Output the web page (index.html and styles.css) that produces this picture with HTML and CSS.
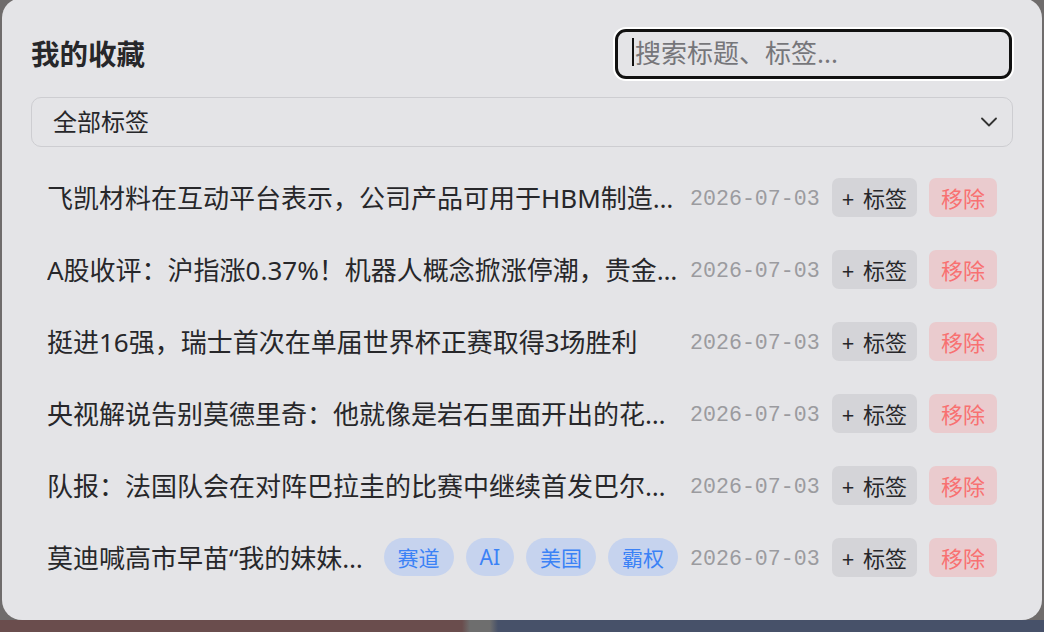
FILE: index.html
```html
<!DOCTYPE html>
<html lang="zh-CN">
<head>
  <meta charset="UTF-8">
  <meta name="viewport" content="width=device-width, initial-scale=1.0">
  <title>我的收藏</title>
  <link rel="stylesheet" href="styles.css">
</head>
<body>

<div class="panel">
  <div class="header">
    <h2>我的收藏</h2>
    <div class="search">
      <input type="text" placeholder="搜索标题、标签...">
      <span class="caret"></span>
    </div>
  </div>

  <div class="select">
    <span>全部标签</span>
    <svg width="16" height="10" viewBox="0 0 16 10"><path d="M1 1.5l7 7 7-7" fill="none" stroke="#333" stroke-width="1.8" stroke-linecap="round" stroke-linejoin="round"/></svg>
  </div>

  <ul class="list">
    <li class="row">
      <span class="title">飞凯材料在互动平台表示，公司产品可用于HBM制造领域</span>
      <span class="date">2026-07-03</span>
      <button class="btn add">+ 标签</button>
      <button class="btn remove">移除</button>
    </li>
    <li class="row">
      <span class="title">A股收评：沪指涨0.37%！机器人概念掀涨停潮，贵金属板块走强</span>
      <span class="date">2026-07-03</span>
      <button class="btn add">+ 标签</button>
      <button class="btn remove">移除</button>
    </li>
    <li class="row">
      <span class="title">挺进16强，瑞士首次在单届世界杯正赛取得3场胜利</span>
      <span class="date">2026-07-03</span>
      <button class="btn add">+ 标签</button>
      <button class="btn remove">移除</button>
    </li>
    <li class="row">
      <span class="title">央视解说告别莫德里奇：他就像是岩石里面开出的花朵一样</span>
      <span class="date">2026-07-03</span>
      <button class="btn add">+ 标签</button>
      <button class="btn remove">移除</button>
    </li>
    <li class="row">
      <span class="title">队报：法国队会在对阵巴拉圭的比赛中继续首发巴尔科拉</span>
      <span class="date">2026-07-03</span>
      <button class="btn add">+ 标签</button>
      <button class="btn remove">移除</button>
    </li>
    <li class="row">
      <span class="title">莫迪喊高市早苗“我的妹妹”，印日关系再升温</span>
      <span class="tag">赛道</span>
      <span class="tag">AI</span>
      <span class="tag">美国</span>
      <span class="tag">霸权</span>
      <span class="date">2026-07-03</span>
      <button class="btn add">+ 标签</button>
      <button class="btn remove">移除</button>
    </li>
  </ul>
</div>

</body>
</html>
```

FILE: styles.css
```css
* { box-sizing: border-box; }
html, body { margin: 0; height: 100%; }

body {
  font-family: "Noto Sans", "Noto Sans CJK SC", sans-serif;
  color: #27272a;
  overflow: hidden;
  /* desktop showing around the popup */
  background: #6f6c6c linear-gradient(90deg, #6a4d4d 0, #6a4d4d 462px, #6e6e6e 470px, #6e6e6e 490px, #475169 498px) no-repeat left bottom / 100% 12px;
}

.panel {
  width: 1040px;
  height: 622px;
  margin: -2px 0 0 2px;
  padding: 31px 29px 0;
  background: #e4e4e7;
  border-radius: 20px;
}

.header {
  display: flex;
  align-items: center;
  justify-content: space-between;
  height: 50px;
}
.header h2 {
  margin: 0;
  font-size: 28.5px;
  font-weight: 700;
  line-height: 1;
}

.search {
  position: relative;
  width: 397px;
  height: 50px;
  margin-right: 1px;
}
.search input {
  width: 100%;
  height: 100%;
  padding: 0 17px 2px;
  border: 3px solid #111;
  border-radius: 11px;
  box-shadow: 0 0 0 2px #fff;
  background: #e4e4e7;
  font: inherit;
  font-size: 26px;
  color: #27272a;
  outline: none;
}
.search input::placeholder { color: #76767a; }
.caret {
  position: absolute;
  left: 17px;
  top: 9px;
  width: 2px;
  height: 28px;
  background: #111;
}

.select {
  display: flex;
  align-items: center;
  justify-content: space-between;
  height: 50px;
  margin-top: 18px;
  padding: 0 15px 3px 21px;
  border: 1.5px solid #cdcdd1;
  border-radius: 10px;
  font-size: 24px;
}
.select svg { margin-top: 3px; }

.list {
  list-style: none;
  margin: 14px 0 0;
  padding: 0;
}
.row {
  display: flex;
  align-items: center;
  gap: 12px;
  height: 72px;
  padding: 0 16px;
}
.title {
  flex: 1;
  min-width: 0;
  overflow: hidden;
  white-space: nowrap;
  text-overflow: ellipsis;
  font-size: 26px;
}
.date {
  padding-top: 3px;
  font-family: "Liberation Mono", monospace;
  font-size: 21.6px;
  color: #9b9b9f;
}

.btn {
  height: 39px;
  border: none;
  border-radius: 7px;
  font-family: inherit;
  font-size: 22px;
  cursor: pointer;
}
.add {
  padding: 0 10px;
  word-spacing: 3px;
  background: #d4d4d8;
  color: #27272a;
}
.remove {
  padding: 0 12px;
  background: #eacbce;
  color: #f87171;
}

.tag {
  display: inline-flex;
  align-items: center;
  height: 38px;
  padding: 0 14px;
  border-radius: 19px;
  background: #c6d3ee;
  color: #3b82f6;
  font-size: 21px;
  white-space: nowrap;
}
```
